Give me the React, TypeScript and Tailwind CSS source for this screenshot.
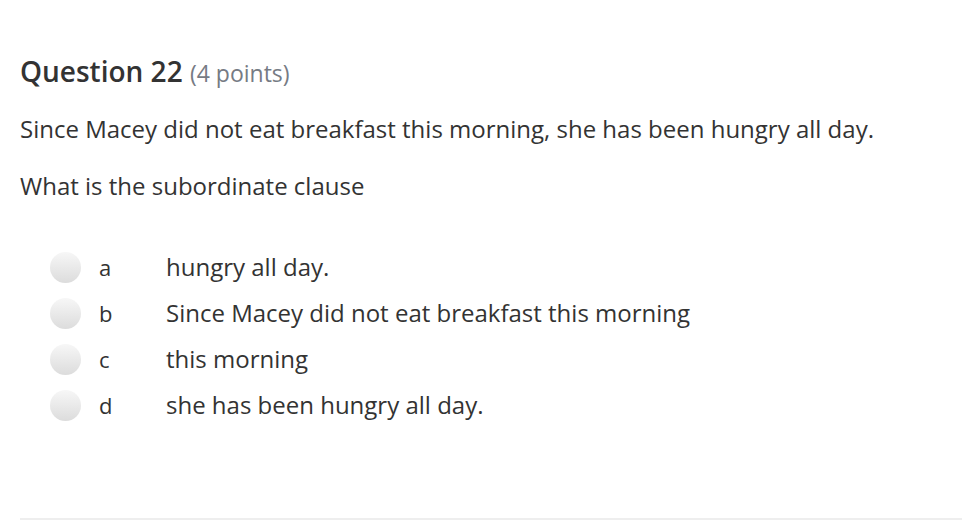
const options = [
  { key: "a", text: "hungry all day." },
  { key: "b", text: "Since Macey did not eat breakfast this morning" },
  { key: "c", text: "this morning" },
  { key: "d", text: "she has been hungry all day." },
];

export default function App() {
  return (
    <div
      className="w-[962px] h-[523px] bg-white overflow-hidden text-[#333]"
      style={{ fontFamily: '"Open Sans", sans-serif' }}
    >
      <div className="pl-5 pt-[51px]">
        {/* Question header */}
        <h2 className="text-[28px] font-semibold leading-[40px] text-[#333]">
          Question 22{" "}
          <span className="text-[23px] font-normal text-[#767b84]">(4 points)</span>
        </h2>

        {/* Prompt */}
        <p className="mt-[20px] text-[24px] leading-[32px]">
          Since Macey did not eat breakfast this morning, she has been hungry all day.
        </p>
        <p className="mt-[25px] text-[24px] leading-[32px]">What is the subordinate clause</p>

        {/* Answer choices */}
        <div className="mt-[49px] flex flex-col gap-[14px]">
          {options.map((o) => (
            <div key={o.key} className="flex items-center h-[32px]">
              <span className="ml-[30px] w-[31px] h-[31px] rounded-full bg-gradient-to-b from-[#f7f7f7] to-[#dcdcdc]" />
              <span className="ml-[18px] w-[67px] text-[22px] text-[#333]">{o.key}</span>
              <span className="text-[24px]">{o.text}</span>
            </div>
          ))}
        </div>
      </div>

      <div className="ml-5 mt-[97px] h-[2px] bg-[#eeeeee]" />
    </div>
  );
}
